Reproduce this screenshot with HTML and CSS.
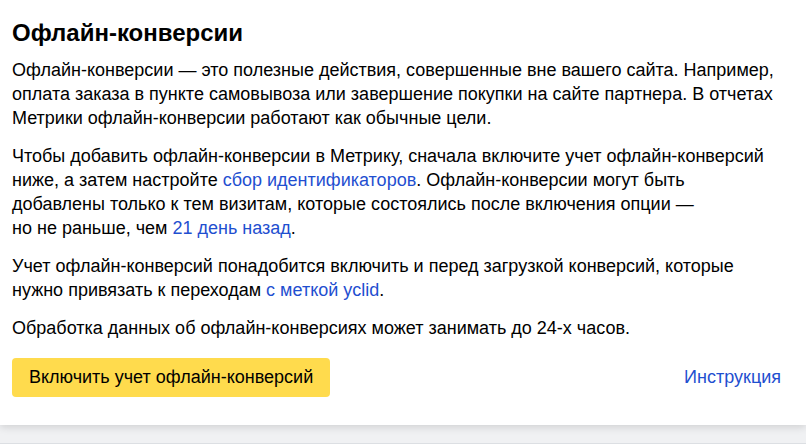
FILE: index.html
```html
<!DOCTYPE html>
<html lang="ru">
<head>
  <meta charset="UTF-8" />
  <title>Офлайн-конверсии</title>
  <link rel="stylesheet" href="styles.css">
</head>
<body>
  <div class="card">
    <h2>Офлайн-конверсии</h2>

    <p>Офлайн-конверсии — это полезные действия, совершенные вне вашего сайта. Например,<br>
    оплата заказа в пункте самовывоза или завершение покупки на сайте партнера. В отчетах<br>
    Метрики офлайн-конверсии работают как обычные цели.</p>

    <p>Чтобы добавить офлайн-конверсии в Метрику, сначала включите учет офлайн-конверсий<br>
    ниже, а затем настройте <a href="#">сбор идентификаторов</a>. Офлайн-конверсии могут быть<br>
    добавлены только к тем визитам, которые состоялись после включения опции —<br>
    но не раньше, чем <a href="#">21 день назад</a>.</p>

    <p>Учет офлайн-конверсий понадобится включить и перед загрузкой конверсий, которые<br>
    нужно привязать к переходам <a href="#">с меткой yclid</a>.</p>

    <p>Обработка данных об офлайн-конверсиях может занимать до 24-х часов.</p>

    <div class="actions">
      <button class="btn-yellow">Включить учет офлайн-конверсий</button>
      <a class="help" href="#">Инструкция</a>
    </div>
  </div>
  <div class="next-card"></div>
</body>
</html>
```

FILE: styles.css
```css
body {
  margin: 0;
  font-family: "Liberation Sans", Arial, sans-serif;
  background: #f0f1f3;
  color: #000;
}
.card {
  background: #fff;
  padding: 16px 25px 28px 12px;
  box-shadow: 0 2px 8px rgba(0, 0, 0, 0.14);
  white-space: nowrap;
}
h2 {
  margin: 0 0 8px;
  font-size: 24px;
  line-height: 34px;
  font-weight: bold;
}
p {
  margin: 0 0 14px;
  font-size: 18px;
  line-height: 24px;
}
a {
  color: #1f4fd0;
  text-decoration: none;
}
.actions {
  display: flex;
  align-items: center;
  justify-content: space-between;
  margin-top: 18px;
}
.btn-yellow {
  background: #ffdb4d;
  border: none;
  border-radius: 4px;
  padding: 0 17px;
  height: 39px;
  font-family: inherit;
  font-size: 18px;
  color: #000;
  cursor: pointer;
}
.help {
  font-size: 18px;
}
.next-card {
  margin-top: 18px;
  height: 1px;
  background: #fff;
  border-top: 1px solid #dcdfe3;
}
```
